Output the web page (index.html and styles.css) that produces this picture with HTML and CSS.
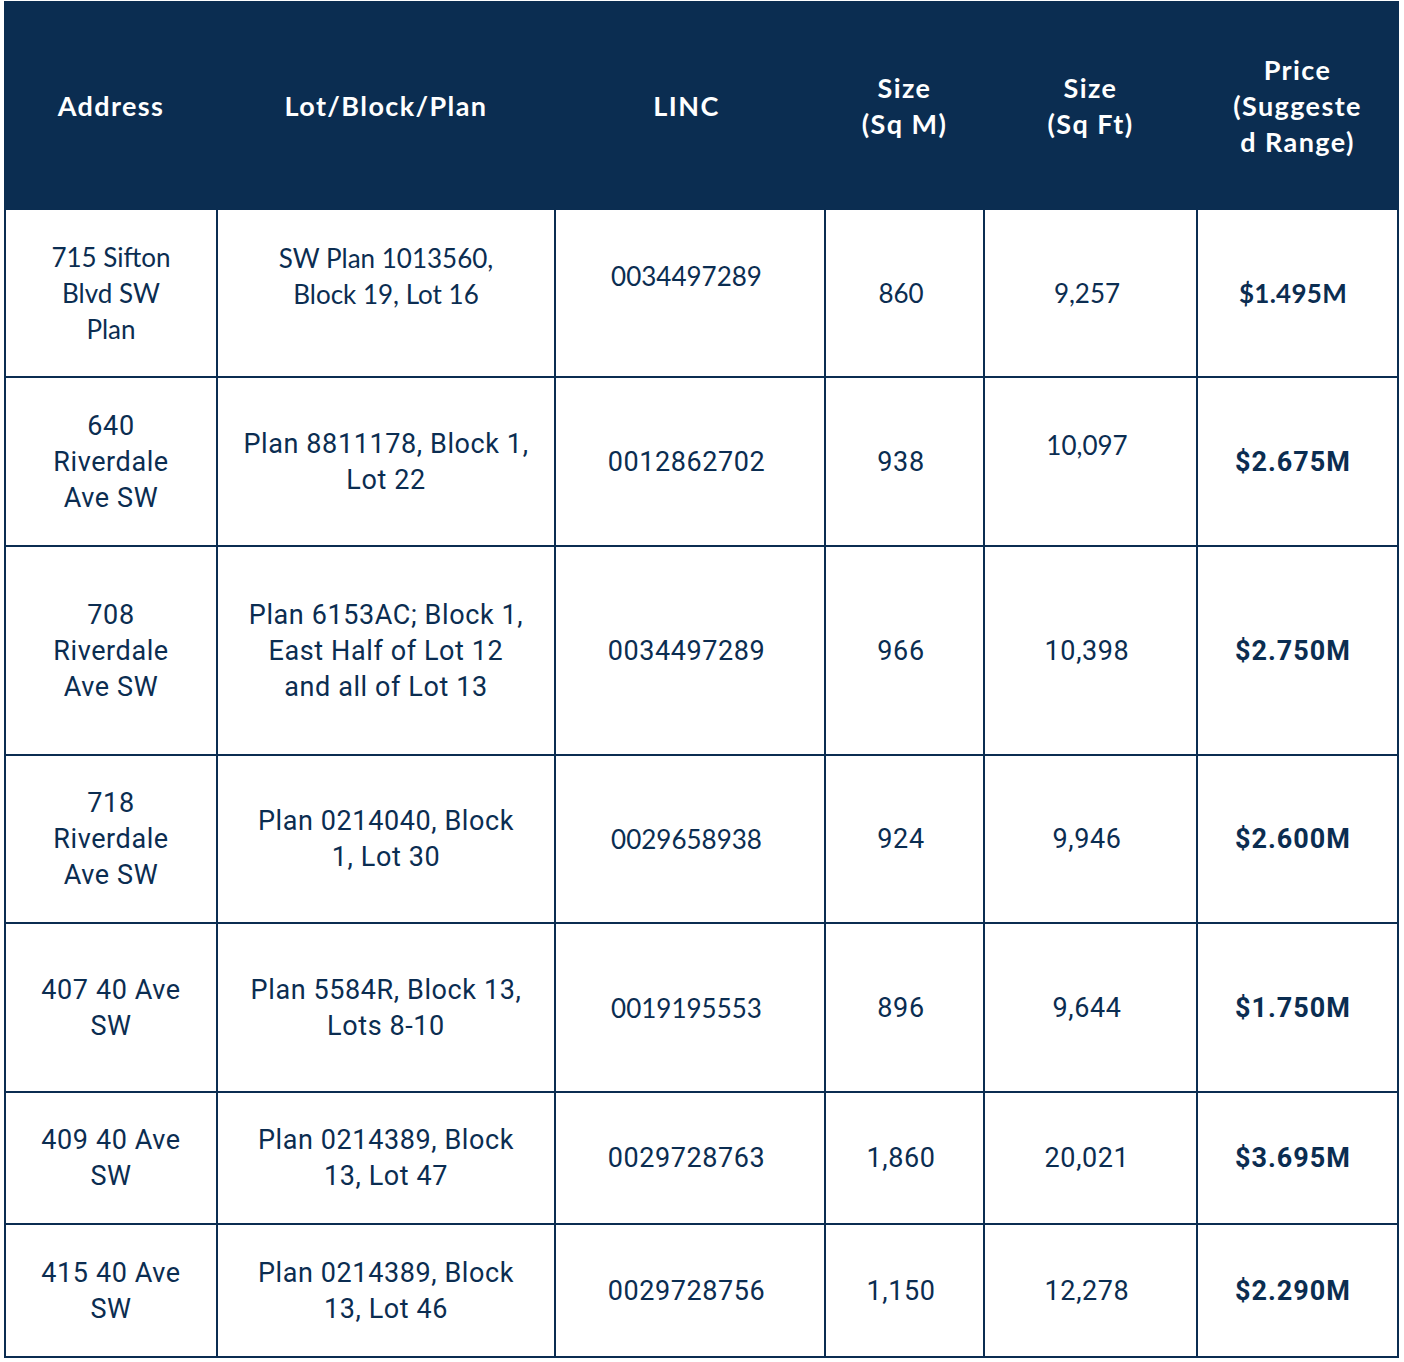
FILE: index.html
```html
<!DOCTYPE html>
<html>
<head>
<meta charset="utf-8">
<link rel="stylesheet" href="styles.css">
</head>
<body>
<table class="lots">
  <colgroup>
    <col class="c1"><col class="c2"><col class="c3"><col class="c4"><col class="c5"><col class="c6">
  </colgroup>
  <thead>
    <tr class="head">
      <th>Address</th>
      <th>Lot/Block/Plan</th>
      <th class="sh">LINC</th>
      <th>Size<br>(Sq M)</th>
      <th>Size<br>(Sq Ft)</th>
      <th>Price<br>(Suggeste<br>d Range)</th>
    </tr>
  </thead>
  <tbody>
    <tr class="r1">
      <td class="rw">715 Sifton<br>Blvd SW<br>Plan</td>
      <td class="rw up">SW Plan 1013560,<br>Block 19, Lot 16</td>
      <td class="rw up sh">0034497289</td>
      <td class="rw sh">860</td>
      <td class="rw sh">9,257</td>
      <td class="rw price">$1.495M</td>
    </tr>
    <tr class="r2">
      <td>640<br>Riverdale<br>Ave SW</td>
      <td>Plan 8811178, Block 1,<br>Lot 22</td>
      <td class="sh">0012862702</td>
      <td class="sh">938</td>
      <td class="rw up sh">10,097</td>
      <td class="price">$2.675M</td>
    </tr>
    <tr class="r3">
      <td>708<br>Riverdale<br>Ave SW</td>
      <td>Plan 6153AC; Block 1,<br>East Half of Lot 12<br>and all of Lot 13</td>
      <td class="sh">0034497289</td>
      <td class="sh">966</td>
      <td class="sh">10,398</td>
      <td class="price">$2.750M</td>
    </tr>
    <tr class="r4">
      <td>718<br>Riverdale<br>Ave SW</td>
      <td>Plan 0214040, Block<br>1, Lot 30</td>
      <td class="rw sh">0029658938</td>
      <td class="sh">924</td>
      <td class="sh">9,946</td>
      <td class="price">$2.600M</td>
    </tr>
    <tr class="r5">
      <td>407 40 Ave<br>SW</td>
      <td>Plan 5584R, Block 13,<br>Lots 8-10</td>
      <td class="rw sh">0019195553</td>
      <td class="sh">896</td>
      <td class="sh">9,644</td>
      <td class="price">$1.750M</td>
    </tr>
    <tr class="r6">
      <td>409 40 Ave<br>SW</td>
      <td>Plan 0214389, Block<br>13, Lot 47</td>
      <td class="sh">0029728763</td>
      <td class="sh">1,860</td>
      <td class="sh">20,021</td>
      <td class="price">$3.695M</td>
    </tr>
    <tr class="r7">
      <td>415 40 Ave<br>SW</td>
      <td>Plan 0214389, Block<br>13, Lot 46</td>
      <td class="sh">0029728756</td>
      <td class="sh">1,150</td>
      <td class="sh">12,278</td>
      <td class="price">$2.290M</td>
    </tr>
  </tbody>
</table>
</body>
</html>
```
FILE: styles.css
```css
html, body {
  margin: 0;
  padding: 0;
  background: #ffffff;
}

body {
  padding: 1px 0 0 4px;
}

.lots {
  border-collapse: collapse;
  table-layout: fixed;
  width: 1393px;
  color: #0b2d51;
  font-family: Roboto, "Liberation Sans", sans-serif;
  font-size: 27px;
  letter-spacing: 0.6px;
  line-height: 36px;
}

.c1 { width: 212px; }
.c2 { width: 338px; }
.c3 { width: 270px; }
.c4 { width: 159px; }
.c5 { width: 213px; }
.c6 { width: 201px; }

.lots th,
.lots td {
  border: 2px solid #0b2d51;
  text-align: center;
  vertical-align: middle;
  padding: 0;
}

.head {
  height: 207px;
  background: #0b2d51;
}

.head th {
  color: #ffffff;
  font-family: Lato, "Open Sans", sans-serif;
  font-weight: 700;
  font-size: 27px;
  letter-spacing: 1.4px;
  line-height: 36px;
}

.r1 { height: 168px; }
.r2 { height: 169px; }
.r3 { height: 209px; }
.r4 { height: 168px; }
.r5 { height: 169px; }
.r6 { height: 132px; }
.r7 { height: 133px; }

.lots td.rw {
  font-family: Lato, "Open Sans", sans-serif;
  font-weight: 400;
  font-size: 26px;
  letter-spacing: 0;
}

.lots .sh {
  padding-right: 7px;
}

.lots td.up {
  padding-bottom: 34px;
}

.lots td.price {
  font-weight: 700;
  letter-spacing: 1px;
  padding-right: 9px;
}

.lots td.rw.price {
  letter-spacing: 0.3px;
}
```
